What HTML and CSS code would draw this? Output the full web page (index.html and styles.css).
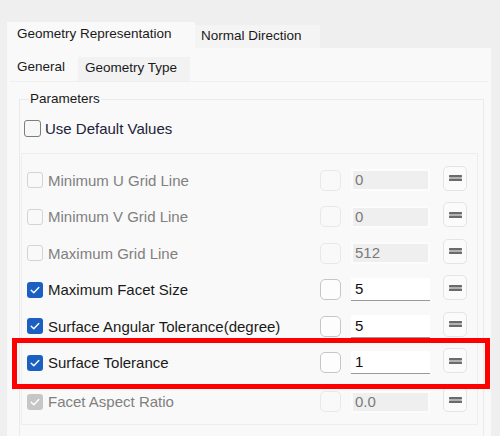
FILE: index.html
```html
<!DOCTYPE html>
<html>
<head>
<meta charset="utf-8">
<link rel="stylesheet" href="styles.css">
</head>
<body>
<div class="window">
  <div class="tabs">
    <div class="tab active">Geometry Representation</div>
    <div class="tab">Normal Direction</div>
  </div>
  <div class="panel">
    <div class="subtabs">
      <div class="subtab active">General</div>
      <div class="subtab">Geometry Type</div>
    </div>
    <fieldset class="group">
      <legend>Parameters</legend>
      <div class="default-row"><span class="cb big"></span><span class="default-label">Use Default Values</span></div>
      <div class="frame">
        <div class="row off">
          <span class="cb"></span><span class="label">Minimum U Grid Line</span>
          <span class="sq"></span><span class="field">0</span>
          <span class="btn"><svg width="13" height="6" viewBox="0 0 13 6"><rect x="0" y="0" width="13" height="2.4" rx="0.6"/><rect x="0" y="3.6" width="13" height="2.4" rx="0.6"/></svg></span>
        </div>
        <div class="row off">
          <span class="cb"></span><span class="label">Minimum V Grid Line</span>
          <span class="sq"></span><span class="field">0</span>
          <span class="btn"><svg width="13" height="6" viewBox="0 0 13 6"><rect x="0" y="0" width="13" height="2.4" rx="0.6"/><rect x="0" y="3.6" width="13" height="2.4" rx="0.6"/></svg></span>
        </div>
        <div class="row off">
          <span class="cb"></span><span class="label">Maximum Grid Line</span>
          <span class="sq"></span><span class="field">512</span>
          <span class="btn"><svg width="13" height="6" viewBox="0 0 13 6"><rect x="0" y="0" width="13" height="2.4" rx="0.6"/><rect x="0" y="3.6" width="13" height="2.4" rx="0.6"/></svg></span>
        </div>
        <div class="row on">
          <span class="cb checked"><svg width="16" height="16" viewBox="0 0 16 16"><path d="M4.2 8.3 L6.8 10.8 L11.8 5.6" fill="none" stroke="#fff" stroke-width="1.4" stroke-linecap="round" stroke-linejoin="round"/></svg></span><span class="label">Maximum Facet Size</span>
          <span class="sq"></span><span class="field">5</span>
          <span class="btn"><svg width="13" height="6" viewBox="0 0 13 6"><rect x="0" y="0" width="13" height="2.4" rx="0.6"/><rect x="0" y="3.6" width="13" height="2.4" rx="0.6"/></svg></span>
        </div>
        <div class="row on">
          <span class="cb checked"><svg width="16" height="16" viewBox="0 0 16 16"><path d="M4.2 8.3 L6.8 10.8 L11.8 5.6" fill="none" stroke="#fff" stroke-width="1.4" stroke-linecap="round" stroke-linejoin="round"/></svg></span><span class="label">Surface Angular Tolerance(degree)</span>
          <span class="sq"></span><span class="field">5</span>
          <span class="btn"><svg width="13" height="6" viewBox="0 0 13 6"><rect x="0" y="0" width="13" height="2.4" rx="0.6"/><rect x="0" y="3.6" width="13" height="2.4" rx="0.6"/></svg></span>
        </div>
        <div class="row on">
          <span class="cb checked"><svg width="16" height="16" viewBox="0 0 16 16"><path d="M4.2 8.3 L6.8 10.8 L11.8 5.6" fill="none" stroke="#fff" stroke-width="1.4" stroke-linecap="round" stroke-linejoin="round"/></svg></span><span class="label">Surface Tolerance</span>
          <span class="sq"></span><span class="field">1</span>
          <span class="btn"><svg width="13" height="6" viewBox="0 0 13 6"><rect x="0" y="0" width="13" height="2.4" rx="0.6"/><rect x="0" y="3.6" width="13" height="2.4" rx="0.6"/></svg></span>
        </div>
        <div class="row off last">
          <span class="cb checked"><svg width="16" height="16" viewBox="0 0 16 16"><path d="M4.2 8.3 L6.8 10.8 L11.8 5.6" fill="none" stroke="#fff" stroke-width="1.4" stroke-linecap="round" stroke-linejoin="round"/></svg></span><span class="label">Facet Aspect Ratio</span>
          <span class="sq"></span><span class="field">0.0</span>
          <span class="btn"><svg width="13" height="6" viewBox="0 0 13 6"><rect x="0" y="0" width="13" height="2.4" rx="0.6"/><rect x="0" y="3.6" width="13" height="2.4" rx="0.6"/></svg></span>
        </div>
      </div>
    </fieldset>
  </div>
</div>
<div class="highlight"></div>
</body>
</html>
```
FILE: styles.css
```css
html, body {
  margin: 0;
  padding: 0;
}
body {
  width: 500px;
  height: 436px;
  overflow: hidden;
  background: #efefef;
  font-family: "Liberation Sans", Arial, sans-serif;
  color: #1a1a1a;
}
.window {
  padding: 22px 9px 0 7px;
}
.tabs {
  display: flex;
  align-items: flex-end;
  height: 26px;
}
.tab {
  box-sizing: border-box;
  width: 125px;
  height: 23px;
  line-height: 21px;
  padding-left: 6px;
  font-size: 13.5px;
  background: #f4f4f4;
  white-space: nowrap;
}
.tab.active {
  width: 188px;
  height: 26px;
  line-height: 24px;
  padding-left: 10px;
  background: #f9f9f9;
}
.panel {
  height: 388px;
  overflow: hidden;
  background: #f9f9f9;
}
.subtabs {
  display: flex;
  align-items: flex-end;
  height: 27px;
  margin: 0 3px;
  padding-top: 6px;
  border-bottom: 1px solid #efefef;
}
.subtab {
  box-sizing: border-box;
  width: 112px;
  height: 24px;
  line-height: 22px;
  padding-left: 7px;
  font-size: 13.5px;
  background: #f2f2f2;
  white-space: nowrap;
}
.subtab.active {
  width: 68px;
  height: 27px;
  line-height: 25px;
  background: #f9f9f9;
}
.group {
  margin: 7px 7px 0 12px;
  padding: 0;
  height: 400px;
  border: 1px solid #eaeaea;
  min-inline-size: 0;
}
.group legend {
  margin-left: 9px;
  padding: 0 1px;
  font-size: 13.5px;
  line-height: 20px;
}
.default-row {
  display: flex;
  align-items: center;
  height: 24px;
  margin-top: 7px;
  padding-left: 4px;
}
.default-label {
  margin-left: 4px;
  font-size: 15px;
  color: #22223a;
}
.cb {
  box-sizing: border-box;
  display: block;
  flex: none;
  width: 16px;
  height: 16px;
  border: 1px solid #7d7d7d;
  border-radius: 3px;
  background: #f7f7f7;
}
.cb.big {
  width: 17px;
  height: 17px;
}
.cb svg {
  display: block;
}
.cb.checked {
  border: none;
  background: #1b5fc1;
}
.frame {
  margin: 13px 5px 0 1px;
  padding: 7.75px 10px 4px 5px;
  border: 1px solid #eeeeee;
}
.row {
  display: flex;
  align-items: center;
  height: 36.5px;
}
.row.last {
  margin-top: 2.5px;
}
.label {
  flex: 1;
  margin-left: 5px;
  font-size: 15px;
  white-space: nowrap;
}
.sq {
  box-sizing: border-box;
  flex: none;
  width: 21px;
  height: 21px;
  border: 1px solid #c6c6c6;
  border-radius: 5px;
  background: #fdfdfd;
}
.field {
  box-sizing: border-box;
  flex: none;
  width: 79px;
  margin-left: 10px;
  font-size: 15px;
}
.btn {
  box-sizing: border-box;
  display: flex;
  align-items: center;
  justify-content: center;
  flex: none;
  width: 24px;
  height: 25px;
  margin-left: 13px;
  margin-bottom: 4px;
  border: 1px solid #e4e4e4;
  border-radius: 5px;
  background: #fbfbfb;
}
.btn svg {
  display: block;
  fill: #6b6b6b;
}
.row.on .label {
  color: #1a1a1a;
}
.row.on .field {
  height: 23px;
  line-height: 22px;
  padding-left: 4px;
  background: #ffffff;
  border-bottom: 1px solid #9a9a9a;
  color: #111111;
}
.row.off .cb {
  border-color: #d4d4d4;
  background: #f9f9f9;
}
.row.off .cb.checked {
  border: none;
  background: #c6c6c6;
}
.row.off .label {
  color: #808080;
}
.row.off .sq {
  border-color: #e8e8e8;
  background: #f9f9f9;
}
.row.off .field {
  height: 22px;
  line-height: 18px;
  padding-left: 2px;
  border: 2px solid #fcfcfc;
  background: #efefef;
  color: #7a7a7a;
}
.highlight {
  position: absolute;
  left: 12px;
  top: 338px;
  width: 478px;
  height: 51px;
  box-sizing: border-box;
  border: 5px solid #ff0000;
}
```
